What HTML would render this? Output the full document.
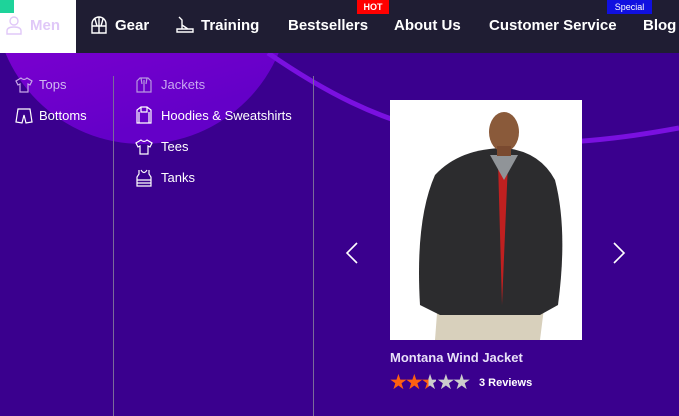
<!DOCTYPE html>
<html><head><style>
*{margin:0;padding:0;box-sizing:border-box}
body{width:679px;height:416px;overflow:hidden;font-family:"Liberation Sans",sans-serif;background:#3a008e;position:relative}
.nav{position:absolute;left:0;top:0;width:679px;height:53px;background:#1f1d33;color:#fff;font-weight:bold;font-size:15px}
.nav span{position:absolute;top:17px;white-space:nowrap}
.men{position:absolute;left:0;top:0;width:76px;height:53px;background:#fff}
.badge{position:absolute;top:0;height:14px;font-size:9px;color:#fff;text-align:center;line-height:14px;font-weight:bold}
.it{position:absolute;color:#fff;font-size:13px;white-space:nowrap}
.ic{position:absolute}
.div{position:absolute;top:76px;width:1px;height:340px;background:#7a6a9a}
</style></head><body>
<svg width="679" height="416" style="position:absolute;left:0;top:0">
<defs><linearGradient id="g" x1="0" y1="0" x2="0.3" y2="1"><stop offset="0" stop-color="#a000dc"/><stop offset="1" stop-color="#6400c8"/></linearGradient></defs>
<circle cx="142" cy="-4" r="148" fill="url(#g)"/>
<path d="M268 53 C380 130 480 165 679 128" stroke="#7a10e0" stroke-width="5" fill="none"/>
</svg>
<div class="nav">
<div class="men"></div>
<div style="position:absolute;left:0;top:0;width:14px;height:13px;background:#1ed39a"></div>
<svg class="ic" style="left:6px;top:15px" width="16" height="20" viewBox="0 0 16 20" fill="none" stroke="#e0c8f8" stroke-width="1.4"><circle cx="8" cy="6" r="4"/><path d="M1 19v-3q0-4 7-4t7 4v3z"/></svg>
<span style="left:30px;color:#e0c8f8">Men</span>
<svg class="ic" style="left:90px;top:16px" width="18" height="18" viewBox="0 0 18 18" fill="none" stroke="#fff" stroke-width="1.4"><path d="M2 17V8a7 7 0 0 1 14 0v9zM2 10h14M9 1v16M5 3l2 7M13 3l-2 7"/></svg>
<span style="left:115px">Gear</span>
<svg class="ic" style="left:176px;top:15px" width="18" height="20" viewBox="0 0 18 20" fill="none" stroke="#fff" stroke-width="1.4"><path d="M3 2l3 3v9M1 14h16v3H1zM6 10l6 4"/></svg>
<span style="left:201px">Training</span>
<span style="left:288px">Bestsellers</span>
<span style="left:394px">About Us</span>
<span style="left:489px">Customer Service</span>
<span style="left:643px">Blog</span>
<div class="badge" style="left:357px;width:32px;background:#f00">HOT</div>
<div class="badge" style="left:607px;width:45px;background:#1010e0;font-weight:normal">Special</div>
</div>
<svg class="ic" style="left:15px;top:77px" width="18" height="16" viewBox="0 0 18 16" fill="none" stroke="#c8a8e8" stroke-width="1.2"><path d="M6 1L1 4l2 4 2-1v8h8V7l2 1 2-4-5-3q-3 3-6 0z"/></svg>
<div class="it" style="left:39px;top:77px;color:#d0b8f0">Tops</div>
<svg class="ic" style="left:15px;top:108px" width="18" height="16" viewBox="0 0 18 16" fill="none" stroke="#fff" stroke-width="1.2"><path d="M3 1h12l2 13-6 1-2-8-2 8-6-1z"/></svg>
<div class="it" style="left:39px;top:108px">Bottoms</div>
<div class="div" style="left:113px"></div>
<div class="div" style="left:313px"></div>
<svg class="ic" style="left:136px;top:77px" width="16" height="16" viewBox="0 0 16 16" fill="none" stroke="#b898e0" stroke-width="1.2"><path d="M4 1h8l3 3v11H1V4zM8 3v12M5 1l1 6M11 1l-1 6"/></svg>
<div class="it" style="left:161px;top:77px;color:#c8a8f0">Jackets</div>
<svg class="ic" style="left:136px;top:106px" width="16" height="18" viewBox="0 0 16 18" fill="none" stroke="#fff" stroke-width="1.2"><path d="M5 1h6l4 3v13H1V4zM5 1v5h6V1M3 6v11M13 6v11"/></svg>
<div class="it" style="left:161px;top:108px">Hoodies &amp; Sweatshirts</div>
<svg class="ic" style="left:135px;top:139px" width="18" height="16" viewBox="0 0 18 16" fill="none" stroke="#fff" stroke-width="1.2"><path d="M6 1L1 4l2 4 2-1v8h8V7l2 1 2-4-5-3q-3 3-6 0z"/></svg>
<div class="it" style="left:161px;top:139px">Tees</div>
<svg class="ic" style="left:136px;top:169px" width="16" height="18" viewBox="0 0 16 18" fill="none" stroke="#fff" stroke-width="1.2"><path d="M3 1v4l-2 3v9h14V8l-2-3V1M5 1q3 5 6 0M1 11h14M1 14h14"/></svg>
<div class="it" style="left:161px;top:170px">Tanks</div>
<div style="position:absolute;left:390px;top:100px;width:192px;height:240px;background:#fff;overflow:hidden">
<svg width="192" height="240" viewBox="0 0 192 240">
<path d="M45 240 L48 200 L155 200 L150 240 Z" fill="#d8d0bc"/>
<path d="M30 205 Q25 120 45 75 Q70 48 116 48 Q150 52 165 80 Q178 130 168 205 L150 215 L50 215 Z" fill="#2c2c2e"/>
<path d="M108 62 L112 205 L118 62 Z" fill="#c02020"/>
<path d="M100 55 L114 80 L128 55 Z" fill="#909498"/>
<ellipse cx="114" cy="32" rx="15" ry="20" fill="#8a5a3a"/>
<rect x="107" y="46" width="14" height="10" fill="#7a4a30"/>
</svg></div>
<svg class="ic" style="left:345px;top:242px" width="14" height="22" viewBox="0 0 14 22" fill="none" stroke="#fff" stroke-width="1.6"><path d="M12 1L2 11l10 10"/></svg>
<svg class="ic" style="left:612px;top:242px" width="14" height="22" viewBox="0 0 14 22" fill="none" stroke="#fff" stroke-width="1.6"><path d="M2 1l10 10L2 21"/></svg>
<div class="it" style="left:390px;top:350px;color:#e8e0f8;font-weight:bold;font-size:13px">Montana Wind Jacket</div>
<div style="position:absolute;left:389px;top:372px;font-size:21px;line-height:22px;letter-spacing:-3px"><span style="color:#ff6010">★★</span><span style="background:linear-gradient(90deg,#ff6010 50%,#ccc 50%);-webkit-background-clip:text;color:transparent">★</span><span style="color:#ccc">★★</span></div>
<div class="it" style="left:479px;top:377px;font-size:11px;font-weight:bold">3 Reviews</div>
</body></html>
